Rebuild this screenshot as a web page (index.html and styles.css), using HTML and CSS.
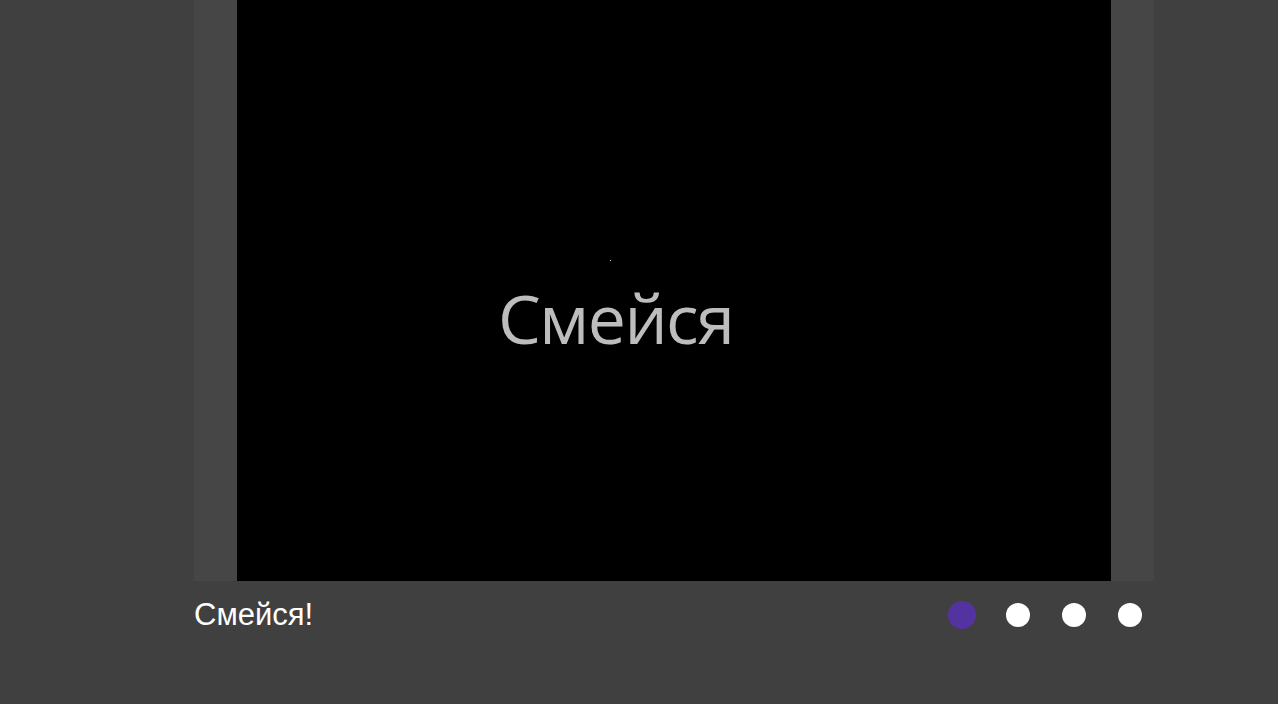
FILE: index.html
```html
<!DOCTYPE html>
<html lang="ru">
<head>
<meta charset="utf-8">
<title>Смейся</title>
<link rel="stylesheet" href="styles.css">
</head>
<body>
<div class="page">
  <div class="stage">
    <div class="video">
      <div class="speck"></div>
      <div class="frame-text">Смейся</div>
    </div>
  </div>
  <div class="caption-row">
    <div class="caption">Смейся!</div>
    <div class="dots">
      <span class="dot active"></span>
      <span class="dot"></span>
      <span class="dot"></span>
      <span class="dot"></span>
    </div>
  </div>
</div>
</body>
</html>
```
FILE: styles.css
```css
html, body {
  margin: 0;
  padding: 0;
  background: #404040;
  height: 100%;
}
body {
  font-family: "Liberation Sans", Arial, sans-serif;
  overflow: hidden;
}
.page {
  width: 960px;
  margin-left: 194px;
}
.stage {
  background: #464646;
  height: 581px;
  padding: 0 43px;
}
.video {
  background: #000;
  height: 581px;
  display: flex;
  flex-direction: column;
}
.speck {
  width: 1px;
  height: 1px;
  background: #d0d0d0;
  margin: 260px 0 0 373px;
}
.frame-text {
  margin: 23px 0 0 261px;
  font-family: "Open Sans", "Noto Sans", sans-serif;
  font-size: 68px;
  line-height: 68px;
  letter-spacing: -1.5px;
  color: #bdbdbd;
}
.caption-row {
  display: flex;
  align-items: center;
  justify-content: space-between;
  margin-top: 15px;
  padding-right: 12px;
}
.caption {
  color: #fff;
  font-size: 31px;
  line-height: 37px;
}
.dots {
  display: flex;
  gap: 32px;
}
.dot {
  width: 24px;
  height: 24px;
  border-radius: 50%;
  background: #fff;
}
.dot.active {
  background: #5233a0;
  transform: scale(1.167);
}
```
